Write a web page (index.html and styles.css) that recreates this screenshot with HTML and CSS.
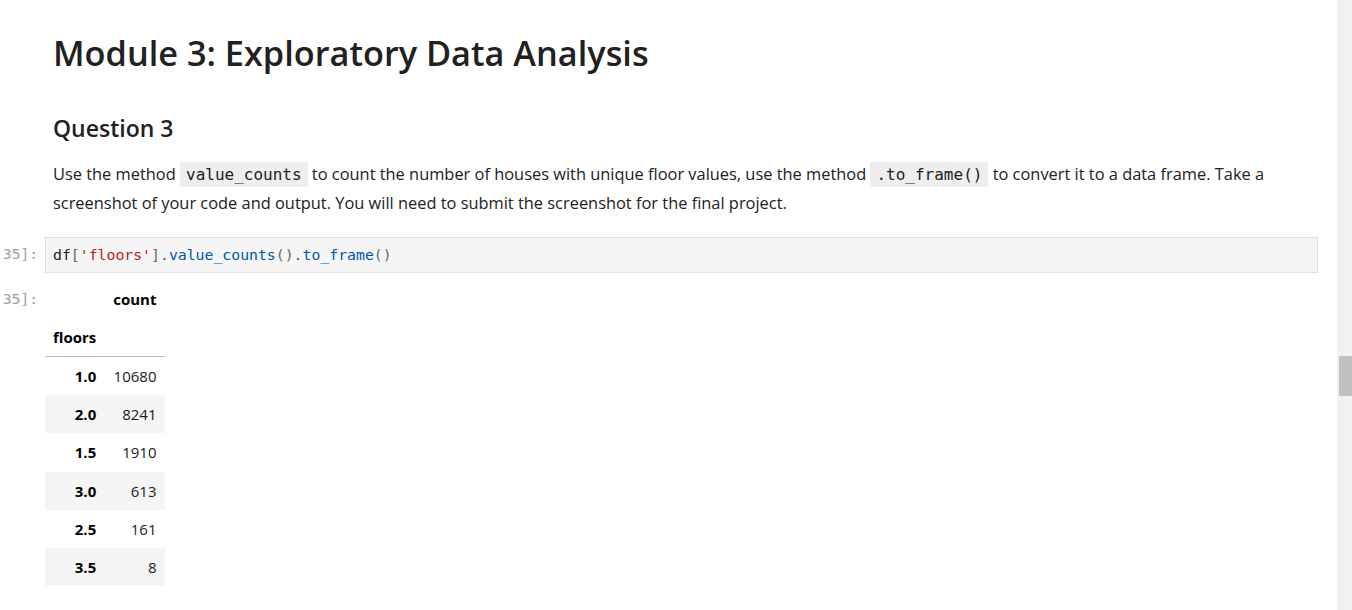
FILE: index.html
```html
<!DOCTYPE html>
<html>
<head>
<meta charset="utf-8">
<link rel="stylesheet" href="styles.css">
</head>
<body>
<div class="page">
  <div class="notebook">
    <div class="cell md">
      <div class="prompt"></div>
      <div class="md-body">
        <h1>Module 3: Exploratory Data Analysis</h1>
        <h2>Question 3</h2>
        <p>Use the method <code>value_counts</code> to count the number of houses with unique floor values, use the method <code>.to_frame()</code> to convert it to a data frame. Take a screenshot of your code and output. You will need to submit the screenshot for the final project.</p>
      </div>
    </div>
    <div class="cell code">
      <div class="prompt">35]:</div>
      <div class="input"><span class="n">df</span><span class="p">[</span><span class="s">'floors'</span><span class="p">]</span><span class="o">.</span><span class="f">value_counts</span><span class="p">()</span><span class="o">.</span><span class="f">to_frame</span><span class="p">()</span></div>
    </div>
    <div class="cell out">
      <div class="prompt">35]:</div>
      <table class="df">
        <thead>
          <tr><th></th><th class="num">count</th></tr>
          <tr class="last"><th>floors</th><th></th></tr>
        </thead>
        <tbody>
          <tr><th>1.0</th><td>10680</td></tr>
          <tr><th>2.0</th><td>8241</td></tr>
          <tr><th>1.5</th><td>1910</td></tr>
          <tr><th>3.0</th><td>613</td></tr>
          <tr><th>2.5</th><td>161</td></tr>
          <tr><th>3.5</th><td>8</td></tr>
        </tbody>
      </table>
    </div>
  </div>
  <div class="scrollbar"><div class="thumb"></div></div>
</div>
</body>
</html>
```
FILE: styles.css
```css
html, body {
  margin: 0;
  padding: 0;
  background: #fff;
}
body {
  font-family: "Open Sans", "Noto Sans", sans-serif;
  color: #212121;
  overflow: hidden;
}
.page {
  display: flex;
  width: 1352px;
  height: 610px;
}
.notebook {
  flex: 1;
  padding-right: 19px;
  overflow: hidden;
}
.scrollbar {
  width: 15px;
  background: #f1f1f1;
  position: relative;
}
.thumb {
  position: absolute;
  left: 2px;
  right: 0;
  top: 356px;
  height: 40px;
  background: #c1c1c1;
}
.cell {
  display: flex;
}
.prompt {
  width: 45px;
  flex: none;
  font-family: "DejaVu Sans Mono", monospace;
  font-size: 14.6px;
  color: #9e9e9e;
  box-sizing: border-box;
  text-align: right;
  padding-right: 7px;
}
.md-body {
  flex: 1;
  padding-left: 8px;
}
h1 {
  font-size: 34.3px;
  font-weight: 600;
  margin: 29px 0 0;
  line-height: 48px;
}
h2 {
  font-size: 23px;
  font-weight: 600;
  margin: 36px 0 0;
  line-height: 30px;
}
p {
  font-size: 16.4px;
  line-height: 28px;
  margin: 17px 0 0;
}
code {
  font-family: "DejaVu Sans Mono", monospace;
  font-size: 16px;
  background: #eeeeee;
  padding: 3px 6px;
}
.code {
  margin-top: 20px;
}
.code .prompt {
  padding-top: 8px;
}
.input {
  flex: 1;
  background: #f5f5f5;
  border: 1px solid #e0e0e0;
  height: 34px;
  box-sizing: content-box;
  padding: 0 7px;
  font-family: "DejaVu Sans Mono", monospace;
  font-size: 14.8px;
  line-height: 34px;
  color: #212121;
}
.input .s { color: #ba2121; }
.input .p { color: #666; }
.input .o { color: #666; }
.input .f { color: #0055aa; }
.input .n { color: #212121; }
.out {
  margin-top: 7px;
}
.out .prompt {
  padding-top: 10px;
}
table.df {
  border-collapse: collapse;
  font-size: 15px;
  color: #000;
  font-family: "Open Sans", "Noto Sans", sans-serif;
}
table.df th, table.df td {
  height: 38px;
  padding: 0 9px 0 8px;
  text-align: right;
  vertical-align: middle;
}
table.df tbody th, table.df tbody td {
  height: 38.2px;
}
table.df thead tr.last th {
  text-align: left;
  border-bottom: 1px solid #bdbdbd;
}
table.df th { font-weight: 700; }
table.df td { color: #212121; }
table.df tbody tr:nth-child(even) { background: #f5f5f5; }
```
